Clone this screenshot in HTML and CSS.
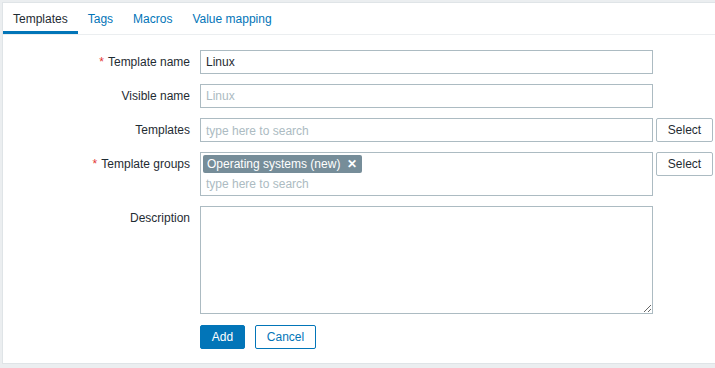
FILE: index.html
```html
<!DOCTYPE html>
<html>
<head>
<meta charset="utf-8">
<link rel="stylesheet" href="styles.css">
</head>
<body>
<div class="panel">
  <ul class="tabs">
    <li class="tab active">Templates</li>
    <li class="tab">Tags</li>
    <li class="tab">Macros</li>
    <li class="tab">Value mapping</li>
  </ul>
  <form class="form">
    <div class="row">
      <label class="label"><span class="req">*</span>Template name</label>
      <div class="field"><input class="input" type="text" value="Linux"></div>
    </div>
    <div class="row">
      <label class="label">Visible name</label>
      <div class="field"><input class="input" type="text" placeholder="Linux"></div>
    </div>
    <div class="row">
      <label class="label">Templates</label>
      <div class="field with-btn">
        <div class="multi"><span class="ph">type here to search</span></div>
        <button type="button" class="btn-alt">Select</button>
      </div>
    </div>
    <div class="row">
      <label class="label"><span class="req">*</span>Template groups</label>
      <div class="field with-btn">
        <div class="multi tall">
          <span class="chip">Operating systems (new)<span class="x">✕</span></span>
          <span class="ph">type here to search</span>
        </div>
        <button type="button" class="btn-alt">Select</button>
      </div>
    </div>
    <div class="row">
      <label class="label">Description</label>
      <div class="field"><textarea class="textarea"></textarea></div>
    </div>
    <div class="row buttons">
      <div class="label"></div>
      <div class="field actions">
        <button type="button" class="btn-primary">Add</button>
        <button type="button" class="btn-secondary">Cancel</button>
      </div>
    </div>
  </form>
</div>
</body>
</html>
```
FILE: styles.css
```css
* { box-sizing: border-box; }
html, body { margin: 0; padding: 0; }
body {
  background: #ebeef0;
  font-family: "Liberation Sans", Arial, sans-serif;
  font-size: 12px;
  color: #1f2c33;
  padding: 2px 0 0 2px;
  overflow: hidden;
  height: 368px;
}
.panel {
  background: #fff;
  border: 1px solid #dfe4e7;
  width: 730px;
  height: 362px;
}
.tabs {
  list-style: none;
  margin: 0;
  padding: 0;
  display: flex;
  border-bottom: 1px solid #ebeef0;
  height: 32px;
}
.tab {
  padding: 9px 10px 0;
  color: #0275b8;
  line-height: 14px;
  height: 31px;
}
.tab.active {
  color: #1f2c33;
  border-bottom: 3px solid #0275b8;
}
.form {
  padding: 15px 0 0;
  display: flex;
  flex-direction: column;
  gap: 10px;
}
.row {
  display: flex;
  align-items: flex-start;
}
.label {
  width: 197px;
  text-align: right;
  padding-right: 10px;
  padding-top: 5px;
  line-height: 14px;
  flex: none;
}
.req {
  color: #e33734;
  margin-right: 4px;
}
.field { flex: none; }
.with-btn { display: flex; gap: 3px; align-items: flex-start; }
.input, .multi, .textarea {
  width: 453px;
  border: 1px solid #acbbc2;
  background: #fff;
  font-family: inherit;
  font-size: 12px;
  color: #1f2c33;
  margin: 0;
}
.input {
  height: 24px;
  padding: 0 5px;
  display: block;
  outline: none;
}
.input::placeholder { color: #acbbc2; }
.multi {
  min-height: 24px;
  padding: 2px 2px 0;
  display: flex;
  flex-direction: column;
  align-items: flex-start;
}
.multi .ph {
  color: #acbbc2;
  line-height: 14px;
  padding: 3px 3px 3px;
}
.multi.tall { height: 44px; }
.multi.tall .ph { padding-top: 4px; }
.chip {
  background: #768d99;
  color: #fff;
  line-height: 18px;
  height: 18px;
  padding: 0 5px 0 4px;
  border-radius: 2px;
  display: inline-flex;
  align-items: center;
}
.chip .x {
  margin-left: 7px;
  font-size: 12px;
  font-weight: bold;
}
.btn-alt {
  height: 24px;
  width: 57px;
  background: #fff;
  border: 1px solid #acbbc2;
  border-radius: 2px;
  color: #1f2c33;
  font-family: inherit;
  font-size: 12px;
  padding: 0;
}
.textarea {
  height: 108px;
  display: block;
  resize: vertical;
  padding: 4px 5px;
}
.buttons { margin-top: 1px; }
.actions { display: flex; gap: 10px; }
.btn-primary, .btn-secondary {
  height: 24px;
  font-family: inherit;
  font-size: 12px;
  border-radius: 2px;
  padding: 0 10px;
}
.btn-primary {
  background: #0275b8;
  border: 1px solid #0275b8;
  color: #fff;
  width: 45px;
}
.btn-secondary {
  background: #fff;
  border: 1px solid #0275b8;
  color: #0275b8;
  width: 61px;
}
```
